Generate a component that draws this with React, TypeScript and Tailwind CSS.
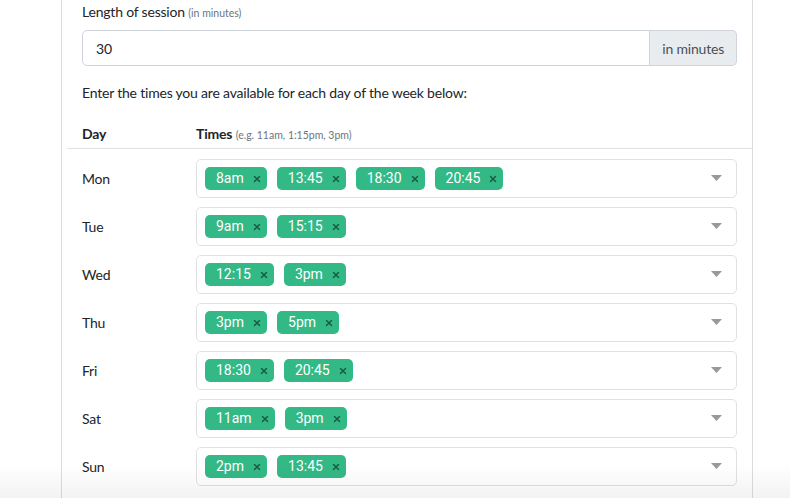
import { X } from "lucide-react"

const schedule = [
  { day: "Mon", times: ["8am", "13:45", "18:30", "20:45"] },
  { day: "Tue", times: ["9am", "15:15"] },
  { day: "Wed", times: ["12:15", "3pm"] },
  { day: "Thu", times: ["3pm", "5pm"] },
  { day: "Fri", times: ["18:30", "20:45"] },
  { day: "Sat", times: ["11am", "3pm"] },
  { day: "Sun", times: ["2pm", "13:45"] },
]

const TimeTag = ({ label }: { label: string }) => (
  <span className="flex items-center h-[23px] rounded-[5px] bg-[#33b985] pl-[11px] pr-[5px] text-[14px] text-white font-['Roboto',sans-serif]">
    <span>{label}</span>
    <X className="w-[10px] h-[10px] ml-[8px] text-[#1d5a45]" strokeWidth={3.5} />
  </span>
)

export default function App() {
  return (
    <div className="relative w-[790px] h-[498px] overflow-hidden bg-white font-['Lato',sans-serif] text-[14px] tracking-[-0.2px] text-[#212529]">
      <div className="ml-[61px] w-[692px] h-full border-l border-r border-[#dcdcdc]">
        <div className="pl-[20px] pr-[15px] pt-[3px]">
          <label className="block leading-[18px]">
            Length of session <span className="text-[10.5px] tracking-normal text-[#6c757d]">(in minutes)</span>
          </label>
          <div className="flex mt-[8px] h-[36px]">
            <div className="flex-1 flex items-center pl-[13px] border border-[#ced4da] rounded-l-[5px]">30</div>
            <div className="flex items-center px-[12px] text-[#495057] bg-[#e9ecef] border border-l-0 border-[#ced4da] rounded-r-[5px]">
              in minutes
            </div>
          </div>
          <p className="mt-[18px] leading-[18px]">Enter the times you are available for each day of the week below:</p>
        </div>

        <div className="ml-[5px] mt-[21px] flex pb-[4px] border-b border-[#dee2e6]">
          <div className="w-[129px] pl-[15px] font-bold">Day</div>
          <div>
            <span className="font-bold">Times</span>{" "}
            <span className="text-[10.5px] tracking-normal text-[#6c757d]">(e.g. 11am, 1:15pm, 3pm)</span>
          </div>
        </div>

        <div className="pt-[5px] pl-[20px] pr-[15px]">
          {schedule.map((row) => (
            <div key={row.day} className="flex items-center h-[48px]">
              <div className="w-[114px]">{row.day}</div>
              <div className="flex-1 flex items-center h-[39px] border border-[#e1e1e1] rounded-[5px] pl-[8px] pr-[14px]">
                <div className="flex-1 flex gap-[10px] tracking-normal pt-[1px]">
                  {row.times.map((t, i) => (
                    <TimeTag key={i} label={t} />
                  ))}
                </div>
                <svg width="11" height="6" viewBox="0 0 11 6">
                  <path d="M0 0h11L5.5 6z" fill="#999999" />
                </svg>
              </div>
            </div>
          ))}
        </div>
      </div>
      <div className="absolute left-0 right-0 bottom-0 h-[34px] bg-gradient-to-b from-black/0 to-black/[0.05] pointer-events-none" />
    </div>
  )
}
